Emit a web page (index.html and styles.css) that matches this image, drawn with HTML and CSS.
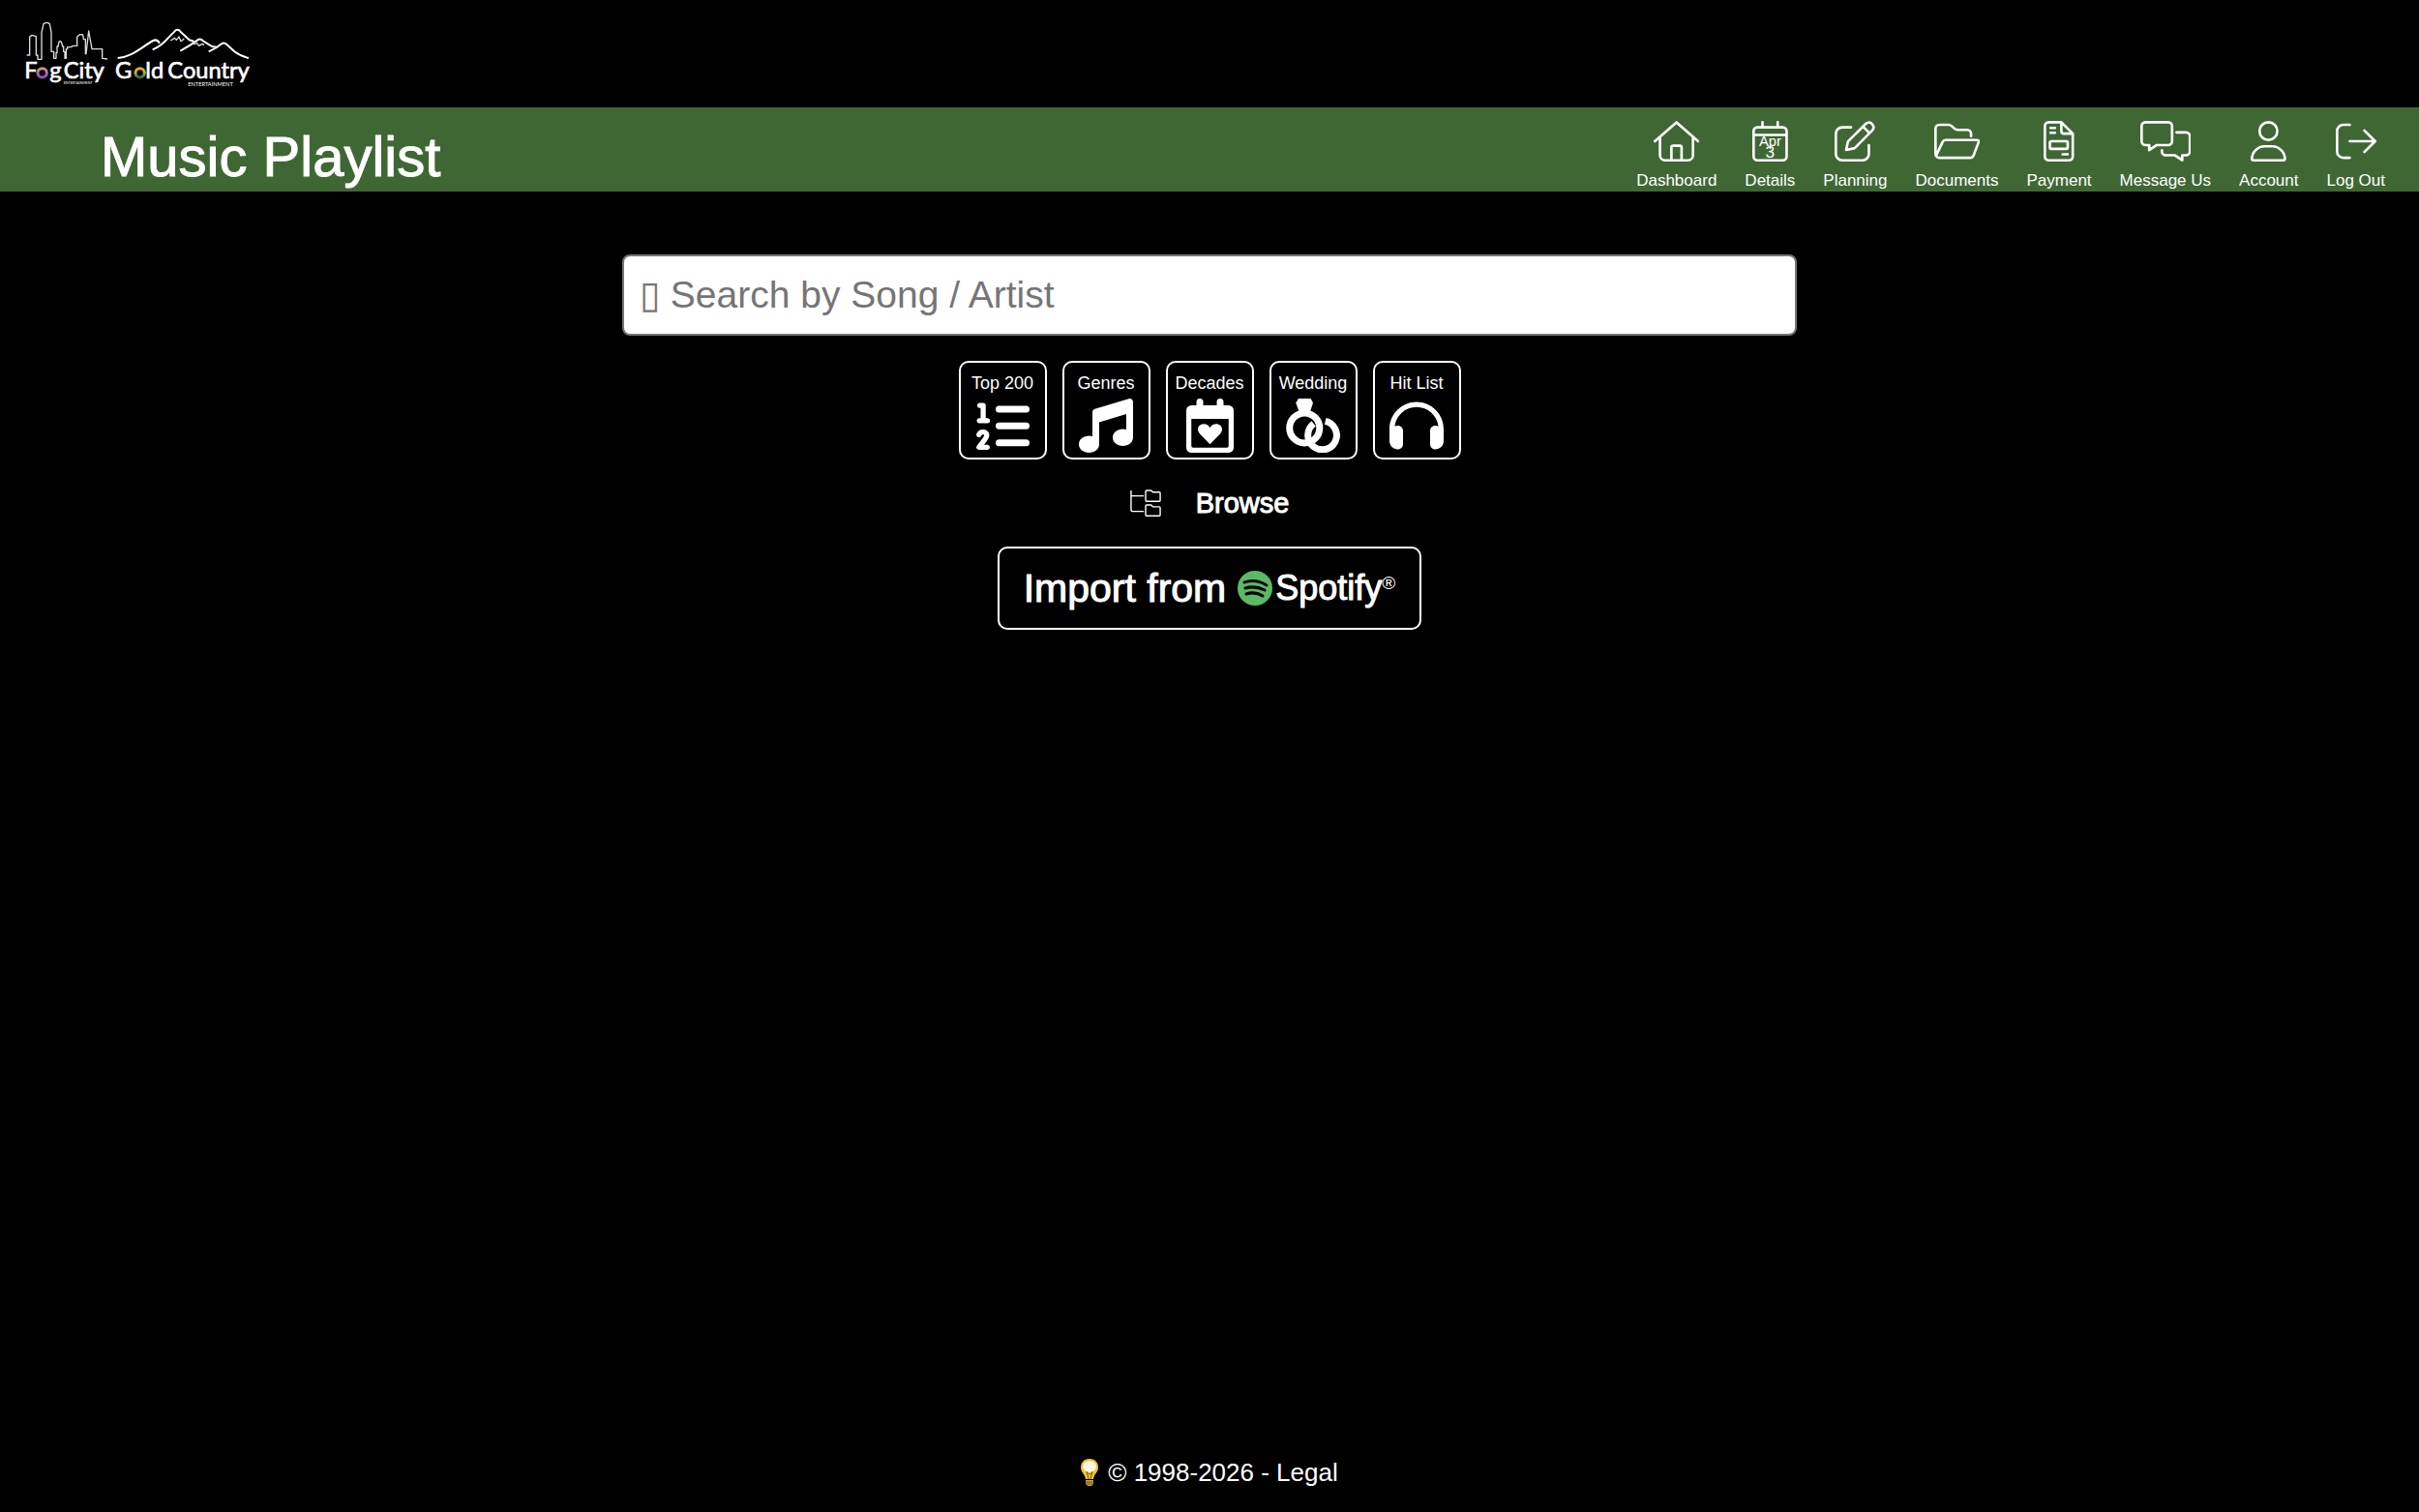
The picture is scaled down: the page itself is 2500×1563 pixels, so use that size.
FILE: index.html
```html
<!DOCTYPE html>
<html lang="en">
<head>
    <meta charset="UTF-8">
    <meta name="viewport" content="width=device-width, initial-scale=1.0">
    <title>Music Playlist</title>
    <link rel="stylesheet" href="styles.css">
</head>
<body>
    <header class="site-header">
        <a href="#" aria-label="FogCity Gold Country">
            <svg class="logo" viewBox="-9 0 789 210">
                <defs>
                    <linearGradient id="fog" x1="0" y1="0" x2="0" y2="1">
                        <stop offset="0" stop-color="#d98f8f"/>
                        <stop offset="1" stop-color="#8a4fb8"/>
                    </linearGradient>
                    <linearGradient id="gold" x1="0" y1="0" x2="0" y2="1">
                        <stop offset="0" stop-color="#d9a82e"/>
                        <stop offset="0.5" stop-color="#c9b02e"/>
                        <stop offset="1" stop-color="#2f6b45"/>
                    </linearGradient>
                </defs>
                <!-- Skyline -->
                <path class="skyline" d="M2 111H11V54L18 49 31 53V111H36V124H48V40L54 14 60 11H68L73 14 78 40V100H86V121H93V104H96V84H99L102 70 106 67 110 72 113 84H116V100H120V121H124V92H128V86H138L146 82H158V54L166 47 176 48 178 62H184V107H186L194 36 204 92H236V121L252 123"/>
                <!-- Mountains -->
                <path class="mountains" d="M284 120C330 116 360 84 394 66Q406 60 414 74M392 94Q420 82 440 58L460 38Q470 26 480 40L506 64 520 68M478 98Q510 80 532 64 540 58 550 68L576 84 590 86M566 100Q590 90 606 76 614 70 622 78L646 100Q664 114 690 120"/>
                <path class="skyline" d="M448 66L460 58 466 64 474 54 480 68 490 60M520 78L530 74 536 82 546 76 552 80"/>
                <g class="logo-text">
                    <text x="-5" y="183">F</text>
                    <text x="73" y="183">g</text>
                    <text x="116" y="183">City</text>
                    <text x="276" y="183">G</text>
                    <text x="370" y="183">ld</text>
                    <text x="439" y="183">Country</text>
                </g>
                <circle class="logo-ring" cx="50" cy="166" r="14" stroke="url(#fog)"/>
                <circle class="logo-ring" cx="353" cy="166" r="14" stroke="url(#gold)"/>
                <text class="logo-small" x="116" y="201">ENTERTAINMENT</text>
                <text class="logo-tag" x="502" y="207">ENTERTAINMENT</text>
            </svg>
        </a>
    </header>

    <div class="title-bar">
        <h1>Music Playlist</h1>
        <nav class="main-nav">
            <a href="#">
                <svg viewBox="0 0 576 512"><path d="M16 256L288 18 560 256M80 208V432a64 64 0 0 0 64 64H432a64 64 0 0 0 64-64V208M224 496V336a24 24 0 0 1 24-24H328a24 24 0 0 1 24 24V496"/></svg>
                Dashboard
            </a>
            <a href="#">
                <svg viewBox="0 0 448 512">
                    <path d="M128 16V80M320 16V80M16 176H432M64 80H384a48 48 0 0 1 48 48V448a48 48 0 0 1-48 48H64a48 48 0 0 1-48-48V128a48 48 0 0 1 48-48z"/>
                    <text class="date-month" x="224" y="314">Apr</text>
                    <text class="date-day" x="224" y="466">3</text>
                </svg>
                Details
            </a>
            <a href="#">
                <svg viewBox="0 0 512 512"><path d="M208 80H96a80 80 0 0 0-80 80V416a80 80 0 0 0 80 80H352a80 80 0 0 0 80-80V304M146 366L166 270Q168 260 176 252L396 34Q430 4 466 32 510 72 480 114L260 336Q252 344 242 346ZM358 72L440 154"/></svg>
                Planning
            </a>
            <a href="#">
                <svg viewBox="0 0 576 512"><path d="M464 192V160a48 48 0 0 0-48-48H296Q272 112 254 96L222 66Q202 48 180 48H64a48 48 0 0 0-48 48V416a48 48 0 0 0 48 48H458Q484 464 494 440L558 270Q566 240 536 240H142Q116 240 106 264L22 440"/></svg>
                Documents
            </a>
            <a href="#">
                <svg viewBox="0 0 384 512"><path d="M64 16H224L368 160V448a48 48 0 0 1-48 48H64a48 48 0 0 1-48-48V64a48 48 0 0 1 48-48zM224 16V128a32 32 0 0 0 32 32H368M88 88H144M88 150H144M240 420H304M96 256H288a16 16 0 0 1 16 16V336a16 16 0 0 1-16 16H96a16 16 0 0 1-16-16V272a16 16 0 0 1 16-16z"/></svg>
                Payment
            </a>
            <a href="#">
                <svg viewBox="0 0 640 512"><path d="M64 16H352a48 48 0 0 1 48 48V256a48 48 0 0 1-48 48H208L112 368V304H64a48 48 0 0 1-48-48V64a48 48 0 0 1 48-48zM456 144H576a48 48 0 0 1 48 48V384a48 48 0 0 1-48 48H528V496L432 432H320a48 48 0 0 1-48-48V368"/></svg>
                Message Us
            </a>
            <a href="#">
                <svg viewBox="0 0 448 512"><circle cx="224" cy="128" r="112"/><path d="M16 482C16 392 90 320 178 320H270C358 320 432 392 432 482Q432 496 418 496H30Q16 496 16 482z"/></svg>
                Account
            </a>
            <a href="#">
                <svg viewBox="0 0 512 512"><path d="M176 48H96a80 80 0 0 0-80 80V384a80 80 0 0 0 80 80H176M176 256H496M360 120L496 256 360 392"/></svg>
                Log Out
            </a>
        </nav>
    </div>

    <main class="playlist">
        <input class="search" type="text" aria-label="Search by Song or Artist" placeholder="&#x25af; Search by Song / Artist">

        <div class="categories">
            <button type="button">
                Top 200
                <svg viewBox="0 0 512 512"><path class="bar" d="M224 100H480M224 258H480M224 418H480"/><path class="digit" d="M42 64H74V208M38 208H114M34 342C46 304 112 308 108 350 106 378 60 420 34 460H112"/></svg>
            </button>
            <button type="button">
                Genres
                <svg viewBox="0 0 512 512"><path d="M499.1 6.3c8.1 6 12.9 15.6 12.9 25.7v72V368c0 44.2-43 80-96 80s-96-35.8-96-80s43-80 96-80c11.2 0 22 1.6 32 4.6V147L192 223.8V432c0 44.2-43 80-96 80s-96-35.8-96-80s43-80 96-80c11.2 0 22 1.6 32 4.6V200 128c0-14.1 9.3-26.6 22.8-30.7l320-96c9.7-2.9 20.2-1.1 28.3 5z"/></svg>
            </button>
            <button type="button">
                Decades
                <svg viewBox="0 0 448 512"><path fill-rule="evenodd" d="M128 0a32 32 0 0 1 32 32V64H288V32a32 32 0 0 1 64 0V64H400a48 48 0 0 1 48 48V464a48 48 0 0 1-48 48H48a48 48 0 0 1-48-48V112A48 48 0 0 1 48 64H96V32A32 32 0 0 1 128 0zM48 192V448a16 16 0 0 0 16 16H384a16 16 0 0 0 16-16V192zM224 432L132 338C84 286 124 240 164 240 192 240 212 254 224 276 236 254 256 240 284 240 324 240 364 286 316 338z"/></svg>
            </button>
            <button type="button">
                Wedding
                <svg viewBox="0 0 512 512"><path d="M118 0H234L256 40 230 118H122L94 40z"/><circle class="ring" cx="176" cy="278" r="142"/><path class="ring" d="M372 214A136 136 0 1 1 262 238"/></svg>
            </button>
            <button type="button">
                Hit List
                <svg viewBox="0 0 512 512"><path d="M256 80C149.900 80 62.400 159.400 49.600 262c9.400-3.800 19.600-6 30.400-6c26.500 0 48 21.500 48 48V432c0 26.500-21.500 48-48 48c-44.200 0-80-35.800-80-80V288C0 146.600 114.600 32 256 32s256 114.600 256 256v112c0 44.200-35.800 80-80 80c-26.500 0-48-21.500-48-48V304c0-26.500 21.500-48 48-48c10.800 0 21 2.100 30.400 6C449.600 159.400 362.100 80 256 80z"/></svg>
            </button>
        </div>

        <button class="browse" type="button">
            <svg viewBox="0 0 34 30"><path d="M1 1V22Q1 24 3 24H15M1 7H15M18 1H23L25 3H32Q33 3 33 4V12Q33 13 32 13H18Q17 13 17 12V2Q17 1 18 1zM18 17H23L25 19H32Q33 19 33 20V28Q33 29 32 29H18Q17 29 17 28V18Q17 17 18 17z"/></svg>
            Browse
        </button>

        <button class="import" type="button">
            Import from
            <span class="spotify">
                <svg viewBox="0 0 36 36"><circle cx="18" cy="18" r="18"/><path d="M7 12Q19 8 30 15"/><path d="M8 18Q18 15 28 20"/><path d="M9 24Q18 21 26 26"/></svg>Spotify<sup>®</sup>
            </span>
        </button>
    </main>

    <footer class="site-footer">
        <svg viewBox="0 0 18 28"><path class="bulb" d="M9 0C3 0 0 4 0 9 0 14 4 15 5 21H13C14 15 18 14 18 9 18 4 15 0 9 0z"/><ellipse class="glow" cx="9" cy="8" rx="7" ry="6"/><path class="wire" d="M6 13L8 21M12 13L10 21M6 14L9 16 12 14"/><path class="base" d="M5 22H13V26L11 28H7L5 26z"/><path class="wire" d="M5 24H13M5 26H13"/></svg>
        <span>© 1998-2026 - <a href="#">Legal</a></span>
    </footer>
</body>
</html>
```
FILE: styles.css
```css
* {
    box-sizing: border-box;
}
body {
    display: flex;
    flex-direction: column;
    min-height: 100vh;
    margin: 0;
    background: #000;
    color: #fff;
    font-family: "Liberation Sans", Arial, sans-serif;
}
a {
    color: #fff;
    text-decoration: none;
}
button {
    background: #000;
    color: #fff;
    border: 2px solid #fff;
    border-radius: 10px;
    font-family: inherit;
    cursor: pointer;
}

/* Header */
.site-header {
    padding: 20px 24px 21px;
}
.logo {
    display: block;
    height: 70px;
}
.skyline,
.mountains {
    fill: none;
    stroke: #ddd;
    stroke-width: 4;
    stroke-linejoin: round;
}
.mountains {
    stroke: #fff;
    stroke-width: 6;
}
.logo text {
    fill: #fff;
    font-family: Lato, sans-serif;
}
.logo-text {
    font-size: 71px;
    stroke: #fff;
    stroke-width: 2;
}
.logo-ring {
    fill: none;
    stroke-width: 9;
}
.logo-small {
    font-size: 11px;
}
.logo-tag {
    font-size: 17px;
}

/* Title bar */
.title-bar {
    display: flex;
    justify-content: space-between;
    align-items: flex-end;
    padding: 14px 35px 0 104px;
    background: #3f6734;
}
h1 {
    margin: 0;
    font-size: 58px;
    font-weight: normal;
    line-height: 72px;
}
h1,
.browse,
.import {
    -webkit-text-stroke: 1px #fff;
}
.main-nav {
    display: flex;
    gap: 29px;
}
.main-nav a {
    display: flex;
    flex-direction: column;
    align-items: center;
    gap: 9px;
    font-size: 17px;
    line-height: 22px;
}
.main-nav svg {
    height: 42px;
    fill: none;
    stroke: #fff;
    stroke-width: 32;
    stroke-linecap: round;
    stroke-linejoin: round;
}
.main-nav text {
    fill: #fff;
    stroke: none;
    text-anchor: middle;
}
.date-month {
    font-size: 180px;
}
.date-day {
    font-size: 210px;
}

/* Playlist */
.playlist {
    flex: 1;
    display: flex;
    flex-direction: column;
    align-items: center;
    padding: 65px 20px;
}
.search {
    width: 100%;
    max-width: 1214px;
    height: 84px;
    padding: 0 16px;
    border: 2px solid #767676;
    border-radius: 8px;
    font-family: inherit;
    font-size: 39px;
}
.search::placeholder {
    color: #757575;
}
.categories {
    display: flex;
    gap: 16px;
    margin-top: 26px;
}
.categories button {
    display: flex;
    flex-direction: column;
    align-items: center;
    gap: 5px;
    width: 91px;
    padding: 10px 0 5px;
    font-size: 18px;
    line-height: 22px;
    white-space: nowrap;
}
.categories svg {
    height: 56px;
    fill: #fff;
}
.categories .bar,
.categories .digit,
.categories .ring {
    fill: none;
    stroke: #fff;
    stroke-width: 64;
    stroke-linecap: round;
    stroke-linejoin: round;
}
.categories .digit {
    stroke-width: 48;
}
.categories .ring {
    stroke-linecap: butt;
}
.browse {
    display: flex;
    align-items: center;
    gap: 36px;
    margin-top: 24px;
    padding: 0;
    border: none;
    font-size: 29px;
    line-height: 42px;
}
.browse svg {
    width: 32px;
    fill: none;
    stroke: #fff;
    stroke-width: 1.5;
}
.import {
    display: flex;
    align-items: center;
    gap: 12px;
    margin-top: 24px;
    padding: 0 25px;
    font-size: 41px;
    line-height: 82px;
}
.spotify {
    display: flex;
    align-items: center;
    font-size: 36px;
}
.spotify svg {
    width: 36px;
    margin-right: 3px;
    fill: #5bb966;
}
.spotify path {
    fill: none;
    stroke: #000;
    stroke-width: 3;
    stroke-linecap: round;
}
.spotify sup {
    align-self: flex-start;
    margin-top: 26px;
    font-size: 19px;
    line-height: 19px;
    -webkit-text-stroke: 0;
}

/* Footer */
.site-footer {
    display: flex;
    justify-content: center;
    align-items: center;
    gap: 10px;
    padding-bottom: 26px;
    font-size: 26px;
    line-height: 30px;
}
.site-footer svg {
    width: 18px;
}
.bulb {
    fill: #f3c23c;
}
.glow {
    fill: #fff6dc;
}
.wire {
    fill: none;
    stroke: #7a5a18;
    stroke-width: 1;
}
.base {
    fill: #c9a040;
}
```
